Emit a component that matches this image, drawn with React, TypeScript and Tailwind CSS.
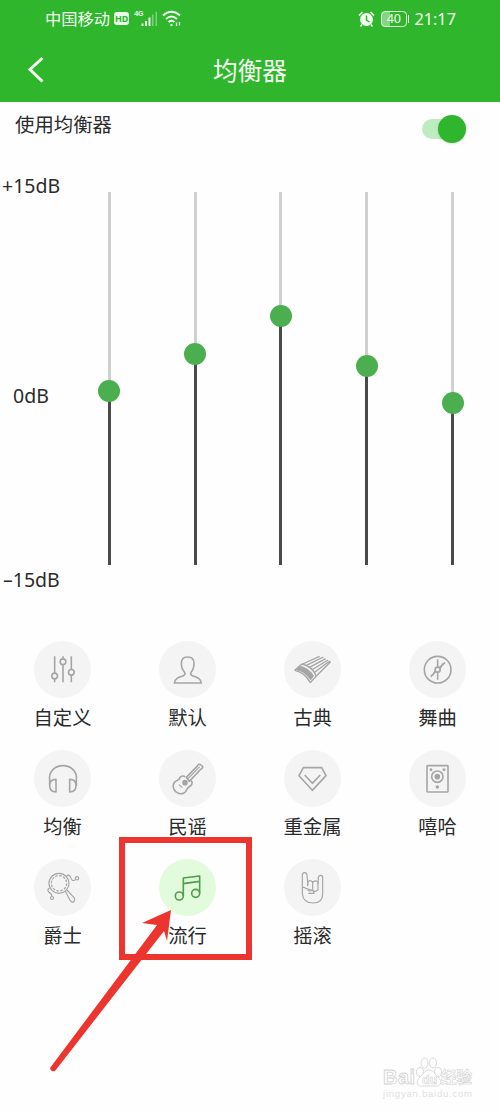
import { useState } from "react";
import type { ReactNode } from "react";

interface PresetProps {
  name: string;
  icon: ReactNode;
}

const presets: PresetProps[] = [
  {
    name: "自定义",
    icon: (
      <>
        <path d="M62 46V96M62 114V124M87 46V53M87 71V124M112 46V85M112 103V124" />
        <circle cx="62" cy="105" r="8.5" />
        <circle cx="87" cy="62" r="8.5" />
        <circle cx="112" cy="94" r="8.5" />
      </>
    ),
  },
  {
    name: "默认",
    icon: (
      <path d="M86 48C73 48 67 56 67 67C67 78 71 88 77 94C79 98 77 102 73 104C59 109 48 112 46 126H127C125 112 114 109 100 104C96 102 94 98 96 94C102 88 105 78 105 67C105 56 99 48 86 48Z" />
    ),
  },
  {
    name: "古典",
    icon: (
      <>
        <path
          d="M45 75Q72 79 89 104L80 117Q63 91 37 86Z"
          fill="currentColor"
          strokeWidth="2"
        />
        <path d="M32 88Q62 94 79 125L97 105" strokeWidth="4" />
        <path d="M32 88L54 69Q84 76 97 105" strokeWidth="4" />
        <path
          d="M56 69L107 46M66 74L118 48M75 80L125 53M83 87L132 57M90 95L137 60M97 105L140 62"
          strokeWidth="4"
        />
      </>
    ),
  },
  {
    name: "舞曲",
    icon: (
      <>
        <circle cx="86" cy="86" r="40" />
        <circle cx="86" cy="86" r="7.5" />
        <path d="M86 55V78M86 94V116M92 80L108 64M80 92L65 107M93 84L101 68M79 89L70 104" />
      </>
    ),
  },
  {
    name: "均衡",
    icon: (
      <path d="M47 90C43 64 64 47 87 47C110 47 131 64 127 90M66 88C52 88 47 94 47 106C47 120 54 126 66 126ZM107 88C121 88 126 94 126 106C126 120 119 126 107 126ZM47 90V108M127 90V108" />
    ),
  },
  {
    name: "民谣",
    icon: (
      <>
        <path d="M79 80C70 76 64 79 61 86C59 92 50 90 45 99C38 112 46 125 58 130C70 134 80 129 83 119C85 112 91 111 96 106C101 101 100 94 96 92" />
        <path d="M82 82L114 49L119 43Q123 42 126 45L131 49Q132 52 129 55L123 60L91 94Z" />
        <path d="M87 86L122 50M60 104L70 113" strokeWidth="3.5" />
        <circle cx="78" cy="98" r="6" fill="currentColor" />
      </>
    ),
  },
  {
    name: "重金属",
    icon: <path d="M58 53H113L126 77L85 121L45 77ZM62 75L85 100L109 75" />,
  },
  {
    name: "嘻哈",
    icon: (
      <>
        <rect x="54" y="47" width="63" height="79" rx="2" />
        <circle cx="85" cy="80" r="17" />
        <circle cx="85" cy="80" r="6" fill="currentColor" />
        <circle cx="66" cy="59" r="2" fill="currentColor" />
        <circle cx="105" cy="59" r="2" fill="currentColor" />
        <circle cx="85" cy="111" r="3" fill="currentColor" />
      </>
    ),
  },
  {
    name: "爵士",
    icon: (
      <g strokeWidth="3.5">
        <circle cx="75" cy="73" r="30" />
        <circle cx="75" cy="73" r="23" strokeDasharray="8 4" />
        <path d="M94 97L109 125Q115 133 121 126Q124 121 120 116L99 93" />
        <path d="M97 52Q106 43 110 56Q114 68 123 63" />
        <circle cx="129" cy="58" r="5" />
        <path d="M48 86Q37 91 45 100Q54 103 53 111" />
        <circle cx="54" cy="117" r="4.5" />
      </g>
    ),
  },
  {
    name: "流行",
    icon: (
      <>
        <circle cx="61" cy="111" r="12" />
        <circle cx="110" cy="103" r="12" />
        <path d="M73 111V57L122 51V103M73 74L122 67" />
      </>
    ),
  },
  {
    name: "摇滚",
    icon: (
      <g strokeWidth="3.5">
        <path d="M55 88V49Q55 41 62 41Q68 41 69 49L72 78M102 75L103 55Q105 48 111 49Q117 51 116 58V105C116 123 104 132 87 132C68 132 57 122 55 105V86" />
        <path d="M71 82V69Q78 61 86 69V94M86 71Q94 61 102 70V93M71 94Q78 98 86 94Q94 101 102 92" />
        <path d="M55 86Q59 83 67 89L82 93Q91 96 90 103H73" />
      </g>
    ),
  },
];

const Preset = ({
  name,
  icon,
  active,
  onClick,
}: PresetProps & { active: boolean; onClick: () => void }) => (
  <button
    type="button"
    onClick={onClick}
    className="flex h-[109px] flex-col items-center"
  >
    <span
      className={
        active
          ? "size-[57px] rounded-full bg-[#e2fbdc] text-[#4f9c4b]"
          : "size-[57px] rounded-full bg-[#f4f4f4] text-[#a5a5a5]"
      }
    >
      <svg
        viewBox="0 0 171 171"
        className="size-full"
        fill="none"
        stroke="currentColor"
        strokeWidth="4.8"
        strokeLinejoin="round"
      >
        {icon}
      </svg>
    </span>
    <span className="mt-[7px] text-[19.3px] leading-[26px]">{name}</span>
  </button>
);

const StatusBar = () => (
  <div className="flex h-[37px] items-center pl-[45px] pr-11 text-[16.3px] leading-none">
    <span className="mt-0.5">中国移动</span>
    <span className="ml-[4px] flex h-[13px] w-[15px] items-center justify-center rounded-[3px] bg-[#e9fbe6] text-[9px] font-bold text-[#2fb62d]">
      HD
    </span>
    <span className="ml-[5px] mb-2.5 font-['Liberation_Sans',sans-serif] text-[7px] font-bold">
      4G
    </span>
    <svg
      className="-ml-0.5 h-5 w-[17px]"
      viewBox="0 0 17 20"
      fill="currentColor"
    >
      <path d="M0.500 14.500h2V17h-2zM4 12h2v5H4zM7.500 8.500h2V17h-2z" />
      <path d="M11 5.500h1.500V17H11zM14.500 3H16v14h-1.500z" opacity=".4" />
    </svg>
    <svg
      className="ml-1 h-5 w-5"
      viewBox="0 0 20 20"
      fill="none"
      stroke="currentColor"
      strokeWidth="2"
    >
      <path d="M1 6.500Q9.500 -1 18 6.500M4 10Q9.500 5 15 10M6.500 13Q9.500 10.500 12.500 13" />
      <circle cx="9.500" cy="16" r="1.200" fill="currentColor" stroke="none" />
      <path d="M14.500 13.500v3.500M17.500 13v3.500" strokeWidth="1.300" />
    </svg>
    <svg className="ml-auto h-4 w-[17px]" viewBox="0 0 17 16">
      <circle cx="8.500" cy="8.500" r="6.500" fill="currentColor" />
      <path
        d="M1 4.500L4.500 1M16 4.500L12.500 1M4 13.500L2.500 15.500M13 13.500L14.500 15.500"
        stroke="currentColor"
        strokeWidth="1.700"
      />
      <path
        d="M8.500 4.500V9L11.500 11"
        fill="none"
        stroke="#2fb62d"
        strokeWidth="1.500"
      />
    </svg>
    <span className="ml-1.5 flex h-4 w-[26px] items-center justify-center rounded-[4px] border-[1.5px] border-[#dff7dc] bg-linear-to-r from-[#86d584] from-35% to-transparent to-35% pt-px text-[12.5px]">
      40
    </span>
    <span className="ml-px h-2 w-[1.5px] bg-[#dff7dc]" />
    <span className="ml-[5px] mt-0.5 text-[16.3px]">21:17</span>
  </div>
);

const bands = [198.5, 161.5, 124, 174, 211];

const Slider = ({ offset }: { offset: number }) => (
  <div className="flex h-[373px] w-[85.800px] flex-col items-center">
    <div className="w-[3px] shrink-0 bg-[#d0d0d0]" style={{ height: offset }} />
    <div className="z-10 -my-[11px] size-[22px] shrink-0 rounded-full bg-[#4bae4f]" />
    <div className="w-[3px] flex-1 bg-[#4a4a4a]" />
  </div>
);

const Watermark = () => (
  <svg
    className="absolute left-[383px] top-[1054px] font-['Liberation_Sans','Noto_Sans_CJK_SC',sans-serif]"
    width="96"
    height="50"
    viewBox="0 0 96 50"
    fill="#fefefe"
    stroke="#d2d2d2"
    strokeWidth="0.8"
  >
    <text x="0" y="30" fontSize="20" fontWeight="700" textLength="32">
      Bai
    </text>
    <ellipse cx="37" cy="18" rx="3.500" ry="4.500" />
    <ellipse cx="41.500" cy="9" rx="3.500" ry="5" />
    <ellipse cx="50" cy="9" rx="3.500" ry="5" />
    <ellipse cx="55" cy="18" rx="3.500" ry="4.500" />
    <path d="M46 16C41 16 41 20 37 23C32 28 34 33 40 32H51C58 33 60 28 55 23C51 20 51 16 46 16Z" />
    <text x="39" y="30" fontSize="12.500" fontWeight="700" strokeWidth="0.600">
      du
    </text>
    <text
      x="58"
      y="29"
      fontSize="15.500"
      fontWeight="700"
      strokeWidth="0.600"
    >
      经验
    </text>
    <text
      x="0"
      y="43"
      fontSize="9.500"
      fill="#dedede"
      stroke="none"
      textLength="89"
    >
      jingyan.baidu.com
    </text>
  </svg>
);

export default function App() {
  const [enabled, setEnabled] = useState(true);
  const [selected, setSelected] = useState("流行");

  return (
    <div className="relative h-[1111px] w-[500px] overflow-hidden bg-[#fefefe] font-['Noto_Sans','Noto_Sans_CJK_SC',sans-serif] text-[#2b2b2b]">
      <header className="h-[102px] bg-[#2fb62d] text-[#f3fdf1]">
        <StatusBar />
        <div className="flex h-[65px] items-center">
          <svg
            className="ml-[27px] h-7 w-[18px]"
            viewBox="0 0 18 28"
            fill="none"
            stroke="currentColor"
            strokeWidth="3"
          >
            <path d="M15.500 2L3 13.500L15.500 25.500" />
          </svg>
          <h1 className="flex-1 pr-[45px] pt-1 text-center text-[24.6px] leading-none">
            均衡器
          </h1>
        </div>
      </header>

      <div className="flex h-[55px] items-start justify-between pl-[15px] pr-[34px]">
        <span className="mt-[9px] text-[19.4px] leading-[28px]">
          使用均衡器
        </span>
        <button
          type="button"
          aria-label="均衡器"
          onClick={() => setEnabled(!enabled)}
          className={
            enabled
              ? "mt-[17px] flex h-5 w-11 items-center justify-end rounded-full bg-[#bfebc0]"
              : "mt-[17px] flex h-5 w-11 items-center justify-start rounded-full bg-gray-300"
          }
        >
          <span className="size-7 rounded-full bg-[#2fb62d] shadow" />
        </button>
      </div>

      <div className="flex h-[484px]">
        <div className="flex w-[66.500px] flex-col text-[19.500px] leading-[26px]">
          <span className="ml-0.5 mt-4">+15dB</span>
          <span className="ml-[13px] mt-[184px]">0dB</span>
          <span className="ml-[3px] mt-[158px]">–15dB</span>
        </div>
        <div className="flex pt-[35px]">
          {bands.map((offset, index) => (
            <Slider key={index} offset={offset} />
          ))}
        </div>
      </div>

      <div className="grid grid-cols-4">
        {presets.map((preset) => (
          <Preset
            key={preset.name}
            {...preset}
            active={preset.name === selected}
            onClick={() => setSelected(preset.name)}
          />
        ))}
      </div>

      <div className="absolute left-[119px] top-[837px] h-[123px] w-[133px] border-[6px] border-[#ec352e]" />
      <svg
        className="absolute left-[40px] top-[900px]"
        width="140"
        height="180"
        viewBox="0 0 140 180"
        fill="#ec352e"
      >
        <path d="M131 10L102 23L117 25L10 168Q11 172 15 171L124 31L127 41Z" />
      </svg>
      <Watermark />
    </div>
  );
}
